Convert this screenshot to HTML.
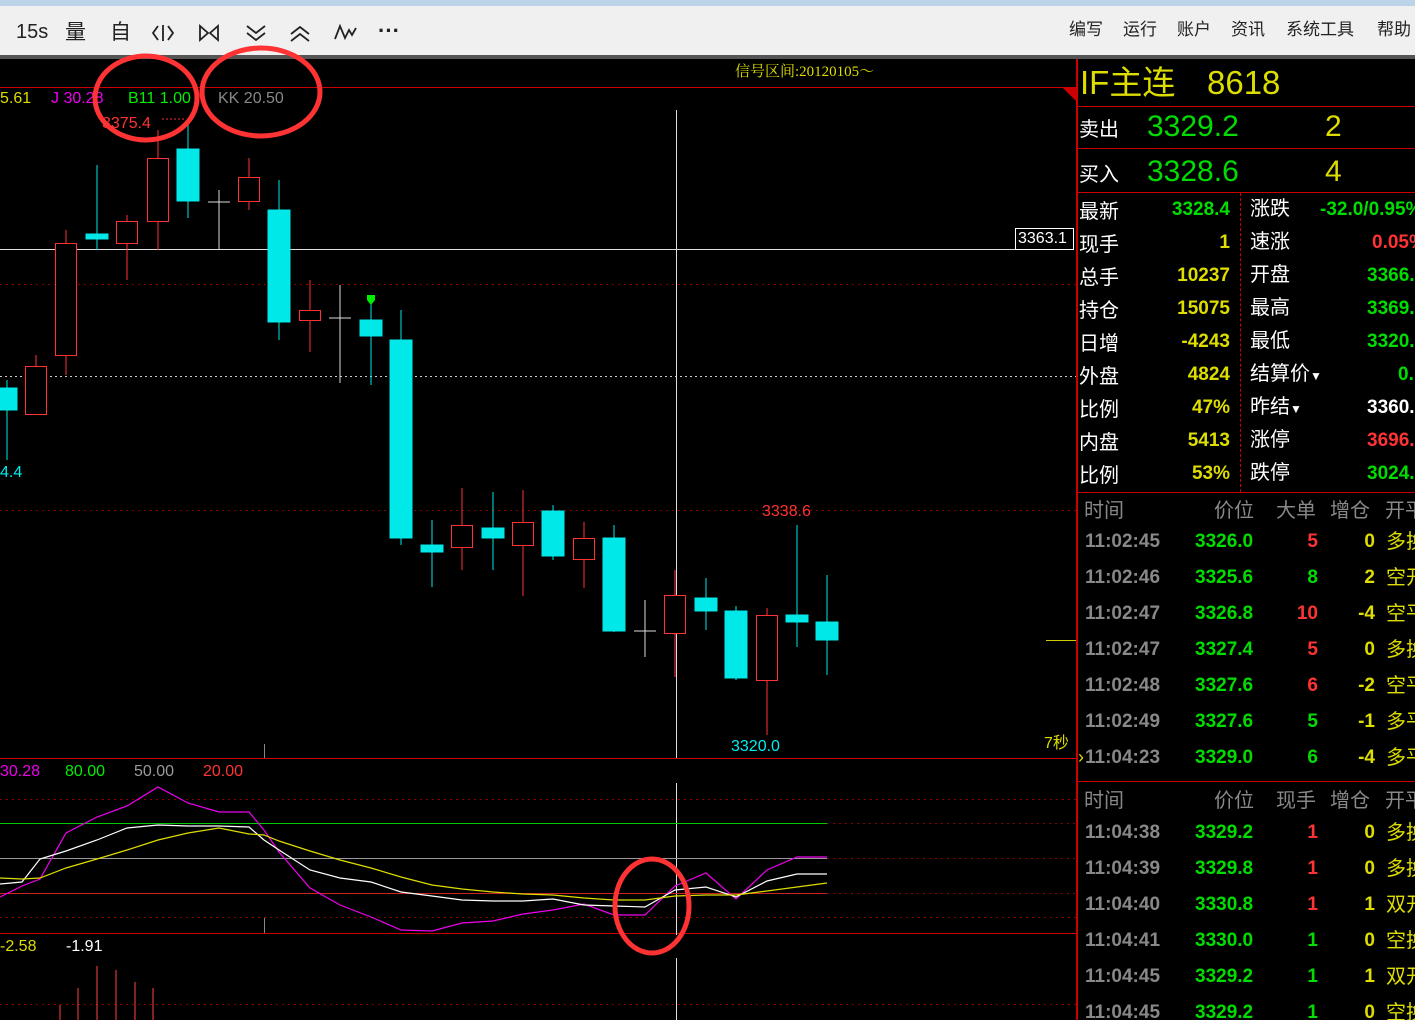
<!DOCTYPE html>
<html style="width:1415px;height:1020px;overflow:hidden"><head><meta charset="utf-8"><style>
*{margin:0;padding:0;box-sizing:border-box}
body{width:1415px;height:1020px;overflow:hidden;background:#000;position:relative;font-family:"Liberation Sans","Noto Sans CJK SC",sans-serif}
.a{position:absolute;white-space:nowrap;line-height:1}
.b{font-weight:bold}
.r{text-align:right}
.col{position:absolute;white-space:nowrap;overflow:hidden}
.col div{height:33px;line-height:33px}
.t36 div{height:36px;line-height:36px}
</style></head><body>
<svg style="position:absolute;left:0;top:0" width="1076" height="1020">
<line x1="0" y1="87.5" x2="1066" y2="87.5" stroke="#c00"/>
<path d="M1062 87 L1076 87 L1076 101 Z" fill="#c00"/>
<line x1="0" y1="249.5" x2="1015" y2="249.5" stroke="#ddd"/>
<line x1="0" y1="284.5" x2="1076" y2="284.5" stroke="#800" stroke-dasharray="2 4"/>
<line x1="0" y1="376.5" x2="1076" y2="376.5" stroke="#ccc" stroke-dasharray="2 3"/>
<line x1="0" y1="510.5" x2="1076" y2="510.5" stroke="#800" stroke-dasharray="2 4"/>
<line x1="1046" y1="640.5" x2="1076" y2="640.5" stroke="#cc0"/>
<line x1="0" y1="758.5" x2="1076" y2="758.5" stroke="#c00"/>
<line x1="0" y1="933.5" x2="1076" y2="933.5" stroke="#c00"/>
<line x1="676.5" y1="110" x2="676.5" y2="758" stroke="#ddd"/>
<line x1="676.5" y1="783" x2="676.5" y2="935" stroke="#ddd"/>
<line x1="676.5" y1="958" x2="676.5" y2="1020" stroke="#ddd"/>
<line x1="264.5" y1="744" x2="264.5" y2="758" stroke="#888"/>
<line x1="264.5" y1="918" x2="264.5" y2="933" stroke="#888"/>
<g stroke-width="1">
<g stroke="#00e8e8" fill="#00e8e8">
<line x1="7" y1="380" x2="7" y2="460"/><rect x="0" y="388" width="17" height="22"/>
<line x1="97" y1="165" x2="97" y2="250"/><rect x="86" y="234" width="22" height="5"/>
<line x1="188" y1="125" x2="188" y2="218"/><rect x="177" y="149" width="22" height="52"/>
<line x1="279" y1="180" x2="279" y2="340"/><rect x="268" y="210" width="22" height="112"/>
<line x1="371" y1="300" x2="371" y2="385"/><rect x="360" y="320" width="22" height="16"/>
<line x1="401" y1="310" x2="401" y2="545"/><rect x="390" y="340" width="22" height="198"/>
<line x1="432" y1="520" x2="432" y2="587"/><rect x="421" y="545" width="22" height="7"/>
<line x1="493" y1="492" x2="493" y2="570"/><rect x="482" y="528" width="22" height="10"/>
<line x1="553" y1="505" x2="553" y2="560"/><rect x="542" y="511" width="22" height="45"/>
<line x1="614" y1="525" x2="614" y2="632"/><rect x="603" y="538" width="22" height="93"/>
<line x1="706" y1="578" x2="706" y2="630"/><rect x="695" y="598" width="22" height="13"/>
<line x1="736" y1="606" x2="736" y2="680"/><rect x="725" y="611" width="22" height="67"/>
<line x1="797" y1="525" x2="797" y2="647"/><rect x="786" y="615" width="22" height="7"/>
<line x1="827" y1="575" x2="827" y2="675"/><rect x="816" y="622" width="22" height="18"/>
</g>
<g stroke="#f33" fill="#000">
<path d="M36 355V366M36 414V415M66 230V243M66 355V375M127 215V221M127 243V280M158 130V158M158 221V250M249 158V177M249 201V210M310 280V310M310 320V352M462 488V525M462 547V570M523 490V522M523 545V596M584 522V538M584 559V588M675 570V595M675 633V677M767 608V615M767 680V735"/>
<rect x="25.5" y="366.5" width="21" height="48"/>
<rect x="55.5" y="243.5" width="21" height="112"/>
<rect x="116.5" y="221.5" width="21" height="22"/>
<rect x="147.5" y="158.5" width="21" height="63"/>
<rect x="238.5" y="177.5" width="21" height="24"/>
<rect x="299.5" y="310.5" width="21" height="10"/>
<rect x="451.5" y="525.5" width="21" height="22"/>
<rect x="512.5" y="522.5" width="21" height="23"/>
<rect x="573.5" y="538.5" width="21" height="21"/>
<rect x="664.5" y="595.5" width="21" height="38"/>
<rect x="756.5" y="615.5" width="21" height="65"/>
</g>
<g stroke="#ddd">
<line x1="219" y1="190" x2="219" y2="250"/><line x1="208" y1="202" x2="230" y2="202"/>
<line x1="340" y1="285" x2="340" y2="383"/><line x1="329" y1="318" x2="351" y2="318"/>
<line x1="645" y1="600" x2="645" y2="657"/><line x1="634" y1="631" x2="656" y2="631"/>
</g>
<path d="M367 295h8v5l-4 5l-4-5z" fill="#0e0"/>
<path d="M162 119 L186 119" stroke="#f33" stroke-dasharray="2 2"/>
</g>
<line x1="0" y1="799.5" x2="1076" y2="799.5" stroke="#800" stroke-dasharray="2 4"/>
<line x1="0" y1="917.5" x2="1076" y2="917.5" stroke="#800" stroke-dasharray="2 4"/>
<line x1="0" y1="823.5" x2="827" y2="823.5" stroke="#0c0"/>
<line x1="0" y1="858.5" x2="827" y2="858.5" stroke="#999"/>
<line x1="0" y1="893.5" x2="827" y2="893.5" stroke="#c22"/>
<line x1="827" y1="858.5" x2="1076" y2="858.5" stroke="#800" stroke-dasharray="2 4"/>
<line x1="827" y1="823.5" x2="1076" y2="823.5" stroke="#800" stroke-dasharray="2 4"/>
<line x1="827" y1="893.5" x2="1076" y2="893.5" stroke="#800" stroke-dasharray="2 4"/>
<polyline fill="none" stroke="#e0e" stroke-width="1.2" points="0,897 22,886 40,879 66,833 97,817 127,806 158,787 188,803 219,812 249,812 264,830 279,852 310,888 340,905 371,917 401,930 432,931 462,923 493,921 523,914 553,910 584,904 614,915 645,915 675,886 706,873 736,899 767,870 797,857 827,857"/>
<polyline fill="none" stroke="#fff" stroke-width="1.2" points="0,884 22,882 40,859 66,851 97,840 127,828 158,825 188,826 219,826 249,827 264,840 279,850 310,870 340,878 371,882 401,892 432,896 462,900 493,901 523,901 553,899 584,905 614,906 645,907 675,890 706,887 736,897 767,881 797,874 827,874"/>
<polyline fill="none" stroke="#dd0" stroke-width="1.2" points="0,878 22,879 40,878 66,868 97,859 127,850 158,840 188,833 219,828 249,834 264,835 279,841 310,851 340,860 371,868 401,877 432,885 462,889 493,892 523,894 553,895 584,898 614,900 645,900 675,896 706,895 736,895 767,891 797,887 827,883"/>
<line x1="0" y1="1004.5" x2="1076" y2="1004.5" stroke="#800" stroke-dasharray="2 4"/>
<g stroke="#f44">
<line x1="60" y1="1005" x2="60" y2="1020"/><line x1="78" y1="988" x2="78" y2="1020"/><line x1="97" y1="966" x2="97" y2="1020"/><line x1="116" y1="970" x2="116" y2="1020"/><line x1="135" y1="982" x2="135" y2="1020"/><line x1="153" y1="988" x2="153" y2="1020"/>
</g>
</svg>

<div class="a" style="left:0;top:0;width:1415px;height:6px;background:#bcd3ea"></div>
<div class="a" style="left:0;top:6px;width:1415px;height:49px;background:#f0f0f0"></div>
<div class="a" style="left:0;top:55px;width:1415px;height:4px;background:#555"></div>
<div class="a" style="left:16px;top:22px;font-size:20px;color:#222">15s</div>
<div class="a" style="left:65px;top:22px;font-size:21px;color:#222">量</div>
<div class="a" style="left:110px;top:22px;font-size:21px;color:#222">自</div>
<svg class="a" style="left:150px;top:20px" width="260" height="28" fill="none" stroke="#222" stroke-width="1.8">
<path d="M8 6 L3 13 L8 20 M13 5 V21 M18 6 L23 13 L18 20"/>
<path d="M50 6 V20 L58 13 Z M68 6 V20 L60 13 Z"/>
<path d="M97 6 L106 13 L115 6 M97 13 L106 20 L115 13"/>
<path d="M141 14 L150 7 L159 14 M141 21 L150 14 L159 21"/>
<path d="M185 19 L190 6 L195 18 L199 10 L202 15 L206 8"/>
</svg>
<div class="a" style="left:378px;top:20px;font-size:22px;color:#222;font-weight:bold">···</div>
<div class="a" style="left:1069px;top:21px;font-size:17px;color:#222">编写</div>
<div class="a" style="left:1123px;top:21px;font-size:17px;color:#222">运行</div>
<div class="a" style="left:1177px;top:21px;font-size:17px;color:#222">账户</div>
<div class="a" style="left:1231px;top:21px;font-size:17px;color:#222">资讯</div>
<div class="a" style="left:1286px;top:21px;font-size:17px;color:#222">系统工具</div>
<div class="a" style="left:1377px;top:21px;font-size:17px;color:#222">帮助</div>

<div class="a" style="left:735px;top:65px;font-size:15px;color:#dd0;font-family:'Liberation Serif','Noto Serif CJK SC',serif">信号区间:20120105～</div>
<div class="a" style="left:0;top:91px;font-size:16px;color:#dd0">5.61</div>
<div class="a" style="left:51px;top:91px;font-size:16px;color:#e0e">J 30.28</div>
<div class="a" style="left:128px;top:91px;font-size:16px;color:#0e0">B11 1.00</div>
<div class="a" style="left:218px;top:91px;font-size:16px;color:#888">KK 20.50</div>
<div class="a" style="left:102px;top:116px;font-size:16px;color:#f33">3375.4</div>
<div class="a" style="left:0;top:465px;font-size:16px;color:#0ee">4.4</div>
<div class="a" style="left:762px;top:504px;font-size:16px;color:#f33">3338.6</div>
<div class="a" style="left:731px;top:739px;font-size:16px;color:#0ee">3320.0</div>
<div class="a" style="left:1044px;top:736px;font-size:16px;color:#dd0">7秒</div>
<div class="a" style="left:1015px;top:228px;width:59px;height:22px;border:1px solid #fff;background:#000;color:#fff;font-size:16px;padding:2px 0 0 2px">3363.1</div>
<div class="a" style="left:0;top:764px;font-size:16px;color:#e0e">30.28</div>
<div class="a" style="left:65px;top:764px;font-size:16px;color:#0e0">80.00</div>
<div class="a" style="left:134px;top:764px;font-size:16px;color:#999">50.00</div>
<div class="a" style="left:203px;top:764px;font-size:16px;color:#f33">20.00</div>
<div class="a" style="left:0;top:939px;font-size:16px;color:#dd0">-2.58</div>
<div class="a" style="left:66px;top:939px;font-size:16px;color:#fff">-1.91</div>

<svg style="position:absolute;left:0;top:0" width="1076" height="1020" fill="none" stroke="#f33" stroke-width="5">
<ellipse cx="146" cy="98" rx="51" ry="42"/>
<ellipse cx="261" cy="92" rx="59" ry="44"/>
<ellipse cx="652" cy="906" rx="37" ry="47"/>
</svg>

<div class="a" style="left:1076px;top:59px;width:2px;height:961px;background:#c00"></div>
<div class="a" style="left:1077px;top:106px;width:338px;height:1px;background:#c00"></div>
<div class="a" style="left:1077px;top:148px;width:338px;height:1px;background:#c00"></div>
<div class="a" style="left:1077px;top:192px;width:338px;height:1px;background:#c00"></div>
<div class="a" style="left:1077px;top:492px;width:338px;height:1px;background:#c00"></div>
<div class="a" style="left:1077px;top:781px;width:338px;height:1px;background:#c00"></div>
<div class="a" style="left:1240px;top:193px;width:0;height:299px;border-left:1px dashed #c00"></div>
<div class="a" style="left:1080px;top:66px;font-size:33px;color:#dd0">IF主连</div>
<div class="a" style="left:1207px;top:66px;font-size:33px;color:#dd0">8618</div>
<div class="a" style="left:1079px;top:120px;font-size:20px;color:#fff">卖出</div>
<div class="a" style="left:1147px;top:112px;font-size:30px;color:#0d0">3329.2</div>
<div class="a" style="left:1325px;top:112px;font-size:30px;color:#dd0">2</div>
<div class="a" style="left:1079px;top:165px;font-size:20px;color:#fff">买入</div>
<div class="a" style="left:1147px;top:157px;font-size:30px;color:#0d0">3328.6</div>
<div class="a" style="left:1325px;top:157px;font-size:30px;color:#dd0">4</div>

<div class="col" style="left:1079px;top:196px;font-size:20px;color:#fff"><div>最新</div><div>现手</div><div>总手</div><div>持仓</div><div>日增</div><div>外盘</div><div>比例</div><div>内盘</div><div>比例</div></div>
<div class="col b r" style="left:1130px;width:100px;top:193px;font-size:19px;color:#dd0"><div style="color:#0d0">3328.4</div><div>1</div><div>10237</div><div>15075</div><div>-4243</div><div>4824</div><div>47%</div><div>5413</div><div>53%</div></div>
<div class="col" style="left:1250px;top:193px;font-size:20px;color:#fff"><div>涨跌</div><div>速涨</div><div>开盘</div><div>最高</div><div>最低</div><div>结算价<span style="font-size:12px">▼</span></div><div>昨结<span style="font-size:12px">▼</span></div><div>涨停</div><div>跌停</div></div>
<div class="col b" style="left:1320px;top:193px;font-size:19px;color:#0d0"><div>-32.0/0.95%</div></div>
<div class="col b" style="left:1372px;top:226px;font-size:19px;color:#f33"><div>0.05%</div></div>
<div class="col b" style="left:1367px;top:259px;font-size:19px;color:#0d0"><div>3366.</div><div>3369.</div><div>3320.</div></div>
<div class="col b" style="left:1398px;top:358px;font-size:19px;color:#0d0"><div>0.</div></div>
<div class="col b" style="left:1367px;top:391px;font-size:19px;color:#fff"><div>3360.</div><div style="color:#f33">3696.</div><div style="color:#0d0">3024.</div></div>

<div class="a" style="left:1084px;top:501px;font-size:20px;color:#888">时间</div>
<div class="a" style="left:1214px;top:501px;font-size:20px;color:#888">价位</div>
<div class="a" style="left:1276px;top:501px;font-size:20px;color:#888">大单</div>
<div class="a" style="left:1330px;top:501px;font-size:20px;color:#888">增仓</div>
<div class="a" style="left:1385px;top:501px;font-size:20px;color:#888">开平</div>
<div class="col t36 b" style="left:1085px;top:524px;font-size:19px;color:#888"><div>11:02:45</div><div>11:02:46</div><div>11:02:47</div><div>11:02:47</div><div>11:02:48</div><div>11:02:49</div><div>11:04:23</div></div>
<div class="a" style="left:1078px;top:748px;font-size:18px;color:#dd0">›</div>
<div class="col t36 b" style="left:1195px;top:524px;font-size:19px;color:#0d0"><div>3326.0</div><div>3325.6</div><div>3326.8</div><div>3327.4</div><div>3327.6</div><div>3327.6</div><div>3329.0</div></div>
<div class="col t36 b r" style="left:1268px;width:50px;top:524px;font-size:19px;color:#f33"><div>5</div><div style="color:#0d0">8</div><div>10</div><div>5</div><div>6</div><div style="color:#0d0">5</div><div style="color:#0d0">6</div></div>
<div class="col t36 b r" style="left:1325px;width:50px;top:524px;font-size:19px;color:#dd0"><div>0</div><div>2</div><div>-4</div><div>0</div><div>-2</div><div>-1</div><div>-4</div></div>
<div class="col t36" style="left:1386px;width:29px;top:524px;font-size:20px;color:#dd0"><div>多换</div><div>空开</div><div>空平</div><div>多换</div><div>空平</div><div>多平</div><div>多平</div></div>

<div class="a" style="left:1084px;top:791px;font-size:20px;color:#888">时间</div>
<div class="a" style="left:1214px;top:791px;font-size:20px;color:#888">价位</div>
<div class="a" style="left:1276px;top:791px;font-size:20px;color:#888">现手</div>
<div class="a" style="left:1330px;top:791px;font-size:20px;color:#888">增仓</div>
<div class="a" style="left:1385px;top:791px;font-size:20px;color:#888">开平</div>
<div class="col t36 b" style="left:1085px;top:815px;font-size:19px;color:#888"><div>11:04:38</div><div>11:04:39</div><div>11:04:40</div><div>11:04:41</div><div>11:04:45</div><div>11:04:45</div></div>
<div class="col t36 b" style="left:1195px;top:815px;font-size:19px;color:#0d0"><div>3329.2</div><div>3329.8</div><div>3330.8</div><div>3330.0</div><div>3329.2</div><div>3329.2</div></div>
<div class="col t36 b r" style="left:1268px;width:50px;top:815px;font-size:19px;color:#f33"><div>1</div><div>1</div><div>1</div><div style="color:#0d0">1</div><div style="color:#0d0">1</div><div style="color:#0d0">1</div></div>
<div class="col t36 b r" style="left:1325px;width:50px;top:815px;font-size:19px;color:#dd0"><div>0</div><div>0</div><div>1</div><div>0</div><div>1</div><div>0</div></div>
<div class="col t36" style="left:1386px;width:29px;top:815px;font-size:20px;color:#dd0"><div>多换</div><div>多换</div><div>双开</div><div>空换</div><div>双开</div><div>空换</div></div>
</body></html>
